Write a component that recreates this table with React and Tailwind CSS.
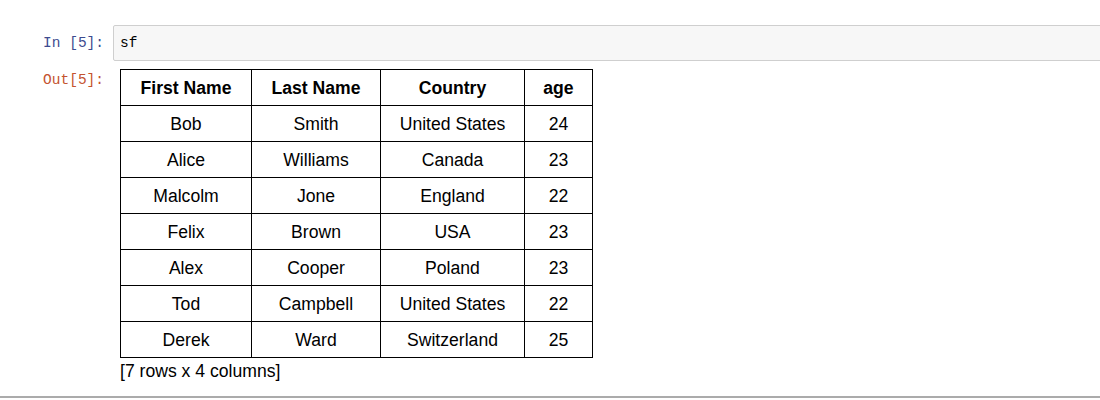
const ROWS = [
  ["Bob", "Smith", "United States", 24],
  ["Alice", "Williams", "Canada", 23],
  ["Malcolm", "Jone", "England", 22],
  ["Felix", "Brown", "USA", 23],
  ["Alex", "Cooper", "Poland", 23],
  ["Tod", "Campbell", "United States", 22],
  ["Derek", "Ward", "Switzerland", 25],
]
const COLS = ["First Name", "Last Name", "Country", "age"]
const WIDTHS = ["w-[131px]", "w-[129px]", "w-[144px]", "w-[68px]"]

const mono = { fontFamily: "'Liberation Mono', 'DejaVu Sans Mono', monospace" }

export default function App() {
  return (
    <div className="w-[1100px] h-[400px] bg-white overflow-hidden relative" style={{ fontFamily: "'Liberation Sans', Arial, sans-serif" }}>
      <div className="pt-[25px]">
        {/* input cell */}
        <div className="flex">
          <div className="w-[113px] pr-[9px] pt-[8px] text-right text-[14.5px] leading-[20px] text-[#3d4b8f]" style={mono}>In [5]:</div>
          <div className="flex-1 -mr-4 h-[36px] border border-[#cfcfcf] bg-[#f7f7f7] rounded-[2px] pl-[6px] pt-[7px] text-[14.5px] leading-[20px] text-black" style={mono}>sf</div>
        </div>

        {/* output cell */}
        <div className="flex mt-[8px]">
          <div className="w-[113px] pr-[9px] pt-[1px] text-right text-[14.5px] leading-[20px] text-[#c4532f]" style={mono}>Out[5]:</div>
          <div className="pl-[7px]">
            <table className="border-collapse table-fixed text-[17.6px] text-black">
              <thead>
                <tr>
                  {COLS.map((c, i) => (
                    <th key={c} className={`${WIDTHS[i]} h-[36px] border border-black font-bold text-center p-0 pt-[2px]`}>{c}</th>
                  ))}
                </tr>
              </thead>
              <tbody>
                {ROWS.map(r => (
                  <tr key={r[0]}>
                    {r.map((v, i) => (
                      <td key={i} className="h-[36px] border border-black text-center p-0 pt-[2px]">{v}</td>
                    ))}
                  </tr>
                ))}
              </tbody>
            </table>
            <div className="text-[17.6px] leading-[24px] text-black mt-[1px]">[7 rows x 4 columns]</div>
          </div>
        </div>
      </div>
      <div className="absolute left-0 right-0 top-[396px] h-[2px] bg-[#ababab]" />
    </div>
  )
}
